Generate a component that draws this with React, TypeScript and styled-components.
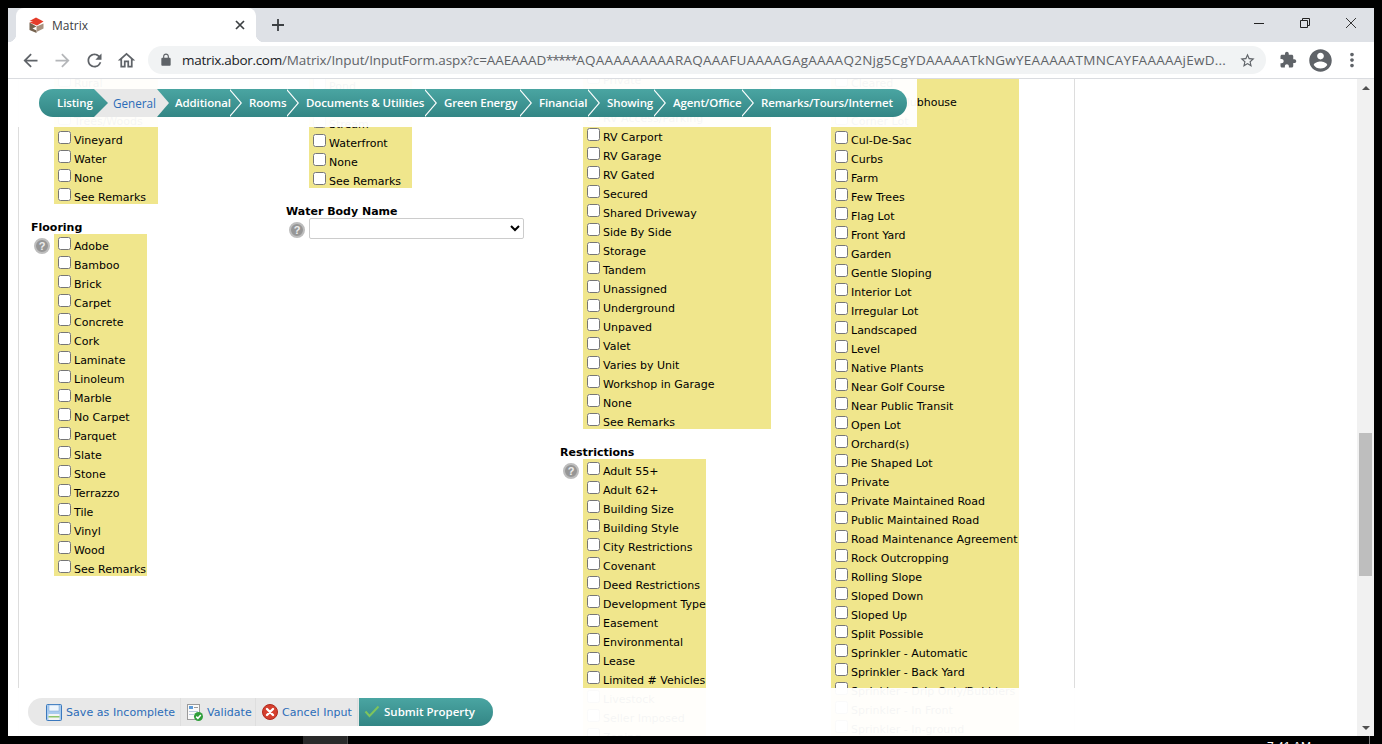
import React from 'react';
import styled, { createGlobalStyle } from 'styled-components';

const GlobalStyle = createGlobalStyle`
  html, body {
    margin: 0;
    padding: 0;
    overflow: hidden;
    background: #000;
  }
`;

const COLORS = {
  KHAKI: '#f0e68c',
  LINK: '#2b6cb8',
  TEAL_TOP: '#4aa5a2',
  TEAL_BOTTOM: '#338685',
  TAB_GREY: '#e8e8e8',
};

const TEAL = `linear-gradient(to bottom, ${COLORS.TEAL_TOP}, ${COLORS.TEAL_BOTTOM})`;
const FORM_FONT = '"DejaVu Sans", Verdana, sans-serif';
const CHROME_FONT = '"Open Sans", "Noto Sans", sans-serif';

const Screen = styled.div`
  display: flex;
  flex-direction: column;
  width: 1382px;
  height: 744px;
  padding-top: 8px;
  box-sizing: border-box;
  background: #000;
  overflow: hidden;
`;

const Browser = styled.div`
  display: flex;
  flex-direction: column;
  height: 728px;
  margin: 0 8px;
  background: #fff;
`;

const TabStrip = styled.div`
  display: flex;
  align-items: flex-end;
  height: 34px;
  padding-left: 8px;
  background: #dee1e6;
`;

const BrowserTab = styled.div`
  position: relative;
  display: flex;
  align-items: center;
  width: 240px;
  height: 34px;
  box-sizing: border-box;
  padding-left: 13px;
  background: #fff;
  border-radius: 8px 8px 0 0;

  &::before,
  &::after {
    content: '';
    position: absolute;
    bottom: 0;
    width: 8px;
    height: 8px;
  }

  &::before {
    left: -8px;
    background: radial-gradient(circle at 0 0, transparent 8px, #fff 8.5px);
  }

  &::after {
    right: -8px;
    background: radial-gradient(circle at 100% 0, transparent 8px, #fff 8.5px);
  }
`;

const TabTitle = styled.span`
  margin-left: 7px;
  flex: 1;
  font: 12px ${CHROME_FONT};
  color: #3c4043;
`;

const TabClose = styled.svg`
  width: 10px;
  height: 10px;
  margin-right: 11px;
`;

const NewTab = styled.svg`
  width: 14px;
  height: 14px;
  margin: 0 0 10px 15px;
`;

const WindowControls = styled.div`
  display: flex;
  margin-left: auto;
  align-self: flex-start;
`;

const WindowButton = styled.div`
  display: flex;
  align-items: center;
  justify-content: center;
  width: 46px;
  height: 29px;
`;

const Toolbar = styled.div`
  display: flex;
  align-items: center;
  height: 36px;
  padding-left: 6px;
  background: #fff;
  border-bottom: 1px solid #dadce0;
`;

const ToolButton = styled.div`
  display: flex;
  align-items: center;
  justify-content: center;
  width: 32px;
  height: 28px;
`;

const Omnibox = styled.div`
  display: flex;
  align-items: center;
  width: 1118px;
  height: 28px;
  margin: 0 6px;
  padding-left: 11px;
  box-sizing: border-box;
  background: #f1f3f4;
  border-radius: 14px;
`;

const UrlText = styled.div`
  width: 1046px;
  margin-left: 9px;
  font: 13.5px ${CHROME_FONT};
  color: #5f6368;
  white-space: nowrap;
  overflow: hidden;
`;

const UrlPart = styled.span<{ $spacing: number; $dark?: boolean }>`
  letter-spacing: ${(p) => p.$spacing}px;
  color: ${(p) => (p.$dark ? '#202124' : 'inherit')};
`;

const StarSlot = styled.div`
  display: flex;
  margin-left: 11px;
`;

const Main = styled.div`
  display: flex;
  height: 657px;
`;

const Scroller = styled.div`
  position: relative;
  flex: 1;
  overflow: hidden;
  background: #fff;
`;

const FormPanel = styled.div`
  display: grid;
  grid-template-columns: 255px 274px 248px 1fr;
  align-items: start;
  width: 1057px;
  height: 760px;
  margin-left: 10px;
  padding-left: 12px;
  box-sizing: border-box;
  border-left: 1px solid #ddd;
  border-right: 1px solid #ddd;
  font: 11px ${FORM_FONT};
  color: #000;
`;

const Column = styled.div<{ $top: number }>`
  margin-top: ${(p) => p.$top}px;
`;

const FieldLabel = styled.div`
  height: 15px;
  margin-top: 15px;
  font-weight: bold;
  line-height: 17px;
  white-space: nowrap;
`;

const FieldBody = styled.div`
  display: flex;
  align-items: flex-start;
`;

const HelpSlot = styled.div`
  flex: 0 0 23px;
`;

const HelpIcon = styled.div`
  display: flex;
  align-items: center;
  justify-content: center;
  width: 16px;
  height: 16px;
  margin: 4px 0 0 3px;
  box-sizing: border-box;
  border: 2px solid #bdbdbd;
  border-radius: 50%;
  background: #969696;
  font: bold 11px "Liberation Sans", Arial, sans-serif;
  color: #ececec;
`;

const OptionList = styled.div<{ $width: number }>`
  width: ${(p) => p.$width}px;
  background: ${COLORS.KHAKI};
`;

const OptionRow = styled.label`
  display: flex;
  align-items: flex-start;
  height: 19px;
  white-space: nowrap;
`;

const OptionBox = styled.input`
  flex: none;
  width: 13px;
  height: 13px;
  margin: 3px 3px 3px 4px;
`;

const OptionText = styled.span`
  padding-top: 5px;
  line-height: 16px;
`;

const WaterSelect = styled.select`
  display: block;
  width: 215px;
  height: 21px;
  box-sizing: border-box;
  background: #fff;
  border: 1px solid #ccc;
  border-radius: 2px;
  font: 11px ${FORM_FONT};
`;

const TabOverlay = styled.div`
  position: absolute;
  top: 0;
  left: 10px;
  width: 899px;
  height: 48px;
  padding: 10px 0 0 21px;
  box-sizing: border-box;
  background: rgba(255, 255, 255, 0.96);
`;

const TabBar = styled.div`
  display: flex;
  width: 868px;
  height: 28px;
  background: ${TEAL};
  border-radius: 14px;
`;

type TipKind = 'line' | 'teal' | 'grey' | 'none';

// $tip: what sits at the right edge of the tab: the usual white chevron, or a solid arrow
const TabItem = styled.div<{ $width: number; $pad: number; $active?: boolean; $tip: TipKind }>`
  position: relative;
  flex: none;
  width: ${(p) => p.$width}px;
  box-sizing: border-box;
  padding-left: ${(p) => p.$pad}px;
  font: ${(p) => (p.$active ? '400 11.7px' : '600 11.5px')}/28px ${CHROME_FONT};
  letter-spacing: ${(p) => (p.$active ? '0' : '-0.12px')};
  color: ${(p) => (p.$active ? COLORS.LINK : '#fff')};
  background: ${(p) => (p.$active ? COLORS.TAB_GREY : 'transparent')};
  white-space: nowrap;

  &::before,
  &::after {
    content: '';
    display: ${(p) => (p.$tip === 'none' ? 'none' : 'block')};
    position: absolute;
    top: 0;
    width: ${(p) => (p.$tip === 'teal' ? 14 : 12)}px;
    height: 28px;
    clip-path: polygon(0 0, 100% 50%, 0 100%);
  }

  &::before {
    left: 100%;
    z-index: 1;
    background: ${(p) => (p.$tip === 'line' ? '#fff' : p.$tip === 'teal' ? TEAL : COLORS.TAB_GREY)};
  }

  &::after {
    display: ${(p) => (p.$tip === 'line' ? 'block' : 'none')};
    left: calc(100% - 1.5px);
    z-index: 1;
    background: ${TEAL};
  }
`;

const TabLabel = styled.span`
  position: relative;
  z-index: 2;
`;

const ActionOverlay = styled.div`
  position: absolute;
  left: 0;
  right: 0;
  bottom: 0;
  height: 48px;
  padding: 10px 0 0 20px;
  box-sizing: border-box;
  background: rgba(255, 255, 255, 0.96);
`;

const ActionBar = styled.div`
  display: flex;
  width: 465px;
  height: 28px;
  overflow: hidden;
  background: ${COLORS.TAB_GREY};
  border-radius: 14px;
`;

const ActionButton = styled.div<{ $width: number; $pad: number }>`
  display: flex;
  align-items: center;
  gap: 4px;
  flex: none;
  width: ${(p) => p.$width}px;
  height: 28px;
  padding-left: ${(p) => p.$pad}px;
  box-sizing: border-box;
  border-right: 1px solid #dedede;
  font: 11px ${FORM_FONT};
  letter-spacing: 0.06px;
  color: ${COLORS.LINK};
  white-space: nowrap;
`;

const SubmitButton = styled(ActionButton)`
  flex: 1;
  margin-left: 1px;
  padding-bottom: 2px;
  border-right: 0;
  background: ${TEAL};
  font: 600 11.5px ${CHROME_FONT};
  letter-spacing: 0;
  color: #fff;
`;

const ScrollTrack = styled.div`
  display: flex;
  flex-direction: column;
  flex: 0 0 17px;
  background: #f1f1f1;
`;

const ScrollArrow = styled.div`
  display: flex;
  align-items: center;
  justify-content: center;
  flex: 0 0 17px;
`;

const ArrowUp = styled.div`
  border: 4px solid transparent;
  border-top: 0;
  border-bottom: 4px solid #505050;
`;

const ArrowDown = styled.div`
  border: 4px solid transparent;
  border-bottom: 0;
  border-top: 4px solid #505050;
`;

const ScrollRail = styled.div`
  flex: 1;
  padding-top: 337px;
`;

const ScrollThumb = styled.div`
  height: 143px;
  margin: 0 2px;
  background: #bebebe;
`;

const Taskbar = styled.div`
  display: flex;
  height: 8px;
  overflow: hidden;
  background: #000;
`;

const TaskItem = styled.div`
  flex: none;
  width: 44px;
  margin-left: 303px;
  background: #2a2a2a;
  border-right: 1px solid #4a4a4a;
`;

const Clock = styled.div`
  margin-left: auto;
  padding-top: 4px;
  font: 12px/14px "Liberation Sans", sans-serif;
  color: #fff;
  white-space: nowrap;
`;

const TaskDivider = styled.div`
  flex: none;
  width: 1px;
  margin: 0 12px 0 58px;
  background: #777;
`;

type Field = { label?: string; help?: boolean; width: number; options: string[] };

const COLUMNS: { top: number; fields: Field[] }[] = [
  {
    top: -8,
    fields: [
      { width: 104, options: ['Rural', '', 'Trees/Woods', 'Vineyard', 'Water', 'None', 'See Remarks'] },
      {
        label: 'Flooring',
        help: true,
        width: 93,
        options: ['Adobe', 'Bamboo', 'Brick', 'Carpet', 'Concrete', 'Cork', 'Laminate', 'Linoleum', 'Marble', 'No Carpet', 'Parquet', 'Slate', 'Stone', 'Terrazzo', 'Tile', 'Vinyl', 'Wood', 'See Remarks'],
      },
    ],
  },
  {
    top: -5,
    fields: [{ width: 103, options: ['Pond', '', 'Stream', 'Waterfront', 'None', 'See Remarks'] }],
  },
  {
    top: -11,
    fields: [
      {
        width: 188,
        options: ['Private', '', 'RV Access/Parking', 'RV Carport', 'RV Garage', 'RV Gated', 'Secured', 'Shared Driveway', 'Side By Side', 'Storage', 'Tandem', 'Unassigned', 'Underground', 'Unpaved', 'Valet', 'Varies by Unit', 'Workshop in Garage', 'None', 'See Remarks'],
      },
      {
        label: 'Restrictions',
        help: true,
        width: 123,
        options: ['Adult 55+', 'Adult 62+', 'Building Size', 'Building Style', 'City Restrictions', 'Covenant', 'Deed Restrictions', 'Development Type', 'Easement', 'Environmental', 'Lease', 'Limited # Vehicles', 'Livestock', 'Seller Imposed', 'Zoning'],
      },
    ],
  },
  {
    top: -8,
    fields: [
      {
        width: 188,
        options: ['Cleared', 'Close to Clubhouse', 'Corner Lot', 'Cul-De-Sac', 'Curbs', 'Farm', 'Few Trees', 'Flag Lot', 'Front Yard', 'Garden', 'Gentle Sloping', 'Interior Lot', 'Irregular Lot', 'Landscaped', 'Level', 'Native Plants', 'Near Golf Course', 'Near Public Transit', 'Open Lot', 'Orchard(s)', 'Pie Shaped Lot', 'Private', 'Private Maintained Road', 'Public Maintained Road', 'Road Maintenance Agreement', 'Rock Outcropping', 'Rolling Slope', 'Sloped Down', 'Sloped Up', 'Split Possible', 'Sprinkler - Automatic', 'Sprinkler - Back Yard', 'Sprinkler - Drip Only/Bubblers', 'Sprinkler - In Front', 'Sprinkler - In-ground'],
      },
    ],
  },
];

const TABS: { title: string; width: number; pad: number; tip: TipKind }[] = [
  { title: 'Listing', width: 55, pad: 18, tip: 'teal' },
  { title: 'General', width: 63, pad: 19, tip: 'grey' },
  { title: 'Additional', width: 73, pad: 18, tip: 'line' },
  { title: 'Rooms', width: 57, pad: 19, tip: 'line' },
  { title: 'Documents & Utilities', width: 138, pad: 19, tip: 'line' },
  { title: 'Green Energy', width: 95, pad: 19, tip: 'line' },
  { title: 'Financial', width: 68, pad: 19, tip: 'line' },
  { title: 'Showing', width: 66, pad: 19, tip: 'line' },
  { title: 'Agent/Office', width: 88, pad: 19, tip: 'line' },
  { title: 'Remarks/Tours/Internet', width: 165, pad: 19, tip: 'none' },
];

const Glyph = ({ d, size, color }: { d: string; size: number; color: string }) => (
  <svg width={size} height={size} viewBox="0 0 24 24" fill={color}>
    <path d={d} />
  </svg>
);

const Favicon = () => (
  <svg width="16" height="16" viewBox="0 0 16 16">
    <polygon points="0.5,5.5 7.5,9.5 3.5,11.5 7.5,13.5 7.5,16 0.5,13" fill="#75624f" />
    <polygon points="7.5,9.5 14.5,6.5 14.5,11.5 7.5,15" fill="#a8917f" />
    <polygon points="0.5,4 7,0.5 14.5,4.5 8,8.5 0.5,5.5 4,4.5" fill="#e53d2b" />
  </svg>
);

const SaveIcon = () => (
  <svg width="16" height="17" viewBox="0 0 16 17">
    <rect x="0.5" y="0.5" width="15" height="16" rx="1" fill="#a9cbee" stroke="#3b78bd" />
    <rect x="3" y="1" width="10" height="6" fill="#eef5fc" stroke="#7ba7d6" strokeWidth="0.5" />
    <rect x="2.5" y="10" width="11" height="6" fill="#f4f4f4" />
    <rect x="2.5" y="12" width="11" height="1.5" fill="#8cc66b" />
  </svg>
);

const ValidateIcon = () => (
  <svg width="16" height="17" viewBox="0 0 16 17">
    <rect x="0.5" y="0.5" width="12" height="15" fill="#fafafa" stroke="#9a9a9a" />
    <rect x="2" y="2" width="4" height="3" fill="#5d9bd8" />
    <rect x="7" y="3" width="4" height="1" fill="#9a9a9a" />
    <rect x="2" y="7" width="9" height="1" fill="#b9c9dc" />
    <rect x="2" y="10" width="5" height="1" fill="#b9c9dc" />
    <circle cx="11.5" cy="12.5" r="4.5" fill="#2f9e3a" />
    <path d="M9.2 12.6l1.7 1.7 2.9-3.2" fill="none" stroke="#fff" strokeWidth="1.5" />
  </svg>
);

const CancelIcon = () => (
  <svg width="16" height="16" viewBox="0 0 16 16">
    <circle cx="8" cy="8" r="7.5" fill="#d5402f" stroke="#b0281c" />
    <path d="M5 5l6 6M11 5l-6 6" stroke="#fff" strokeWidth="2.4" strokeLinecap="round" />
  </svg>
);

const CheckIcon = () => (
  <svg width="16" height="16" viewBox="0 0 16 16">
    <path d="M1.5 8.5l4 4.5L14.5 3.5" fill="none" stroke="#7fc45c" strokeWidth="2" />
  </svg>
);

const ICONS = {
  back: 'M20 11H7.83l5.59-5.59L12 4l-8 8 8 8 1.41-1.41L7.83 13H20v-2z',
  forward: 'M12 4l-1.41 1.41L16.17 11H4v2h12.17l-5.58 5.59L12 20l8-8z',
  reload: 'M17.65 6.35A7.958 7.958 0 0 0 12 4c-4.42 0-7.99 3.58-7.99 8s3.57 8 7.99 8c3.73 0 6.84-2.55 7.73-6h-2.08A5.99 5.99 0 0 1 12 18c-3.31 0-6-2.69-6-6s2.69-6 6-6c1.66 0 3.14.69 4.22 1.78L13 11h7V4l-2.35 2.35z',
  home: 'M12 5.69l5 4.5V18h-2v-6H9v6H7v-7.81l5-4.5M12 3L2 12h3v8h6v-6h2v6h6v-8h3L12 3z',
  lock: 'M18 8h-1V6c0-2.76-2.24-5-5-5S7 3.24 7 6v2H6c-1.1 0-2 .9-2 2v10c0 1.1.9 2 2 2h12c1.1 0 2-.9 2-2V10c0-1.1-.9-2-2-2zM9 6c0-1.66 1.34-3 3-3s3 1.34 3 3v2H9V6z',
  star: 'M22 9.24l-7.19-.62L12 2 9.19 8.63 2 9.24l5.46 4.73L5.82 21 12 17.27 18.18 21l-1.63-7.03L22 9.24zM12 15.4l-3.76 2.27 1-4.28-3.32-2.88 4.38-.38L12 6.1l1.71 4.04 4.38.38-3.32 2.88 1 4.28L12 15.4z',
  puzzle: 'M20.5 11H19V7c0-1.1-.9-2-2-2h-4V3.5C13 2.12 11.88 1 10.5 1S8 2.12 8 3.5V5H4c-1.1 0-1.99.9-1.99 2v3.8H3.5c1.49 0 2.7 1.21 2.7 2.7s-1.21 2.7-2.7 2.7H2V20c0 1.1.9 2 2 2h3.8v-1.5c0-1.49 1.21-2.7 2.7-2.7 1.49 0 2.7 1.21 2.7 2.7V22H17c1.1 0 2-.9 2-2v-4h1.5c1.38 0 2.5-1.12 2.5-2.5S21.88 11 20.5 11z',
  avatar: 'M12 2C6.48 2 2 6.48 2 12s4.48 10 10 10 10-4.48 10-10S17.52 2 12 2zm0 3c1.66 0 3 1.34 3 3s-1.34 3-3 3-3-1.34-3-3 1.34-3 3-3zm0 14.2c-2.5 0-4.71-1.28-6-3.22.03-1.99 4-3.08 6-3.08 1.99 0 5.97 1.09 6 3.08-1.29 1.94-3.5 3.22-6 3.22z',
  kebab: 'M12 8c1.1 0 2-.9 2-2s-.9-2-2-2-2 .9-2 2 .9 2 2 2zm0 2c-1.1 0-2 .9-2 2s.9 2 2 2 2-.9 2-2-.9-2-2-2zm0 6c-1.1 0-2 .9-2 2s.9 2 2 2 2-.9 2-2-.9-2-2-2z',
};

const App = () => {
  return (
    <Screen>
      <GlobalStyle />
      <Browser>
        <TabStrip>
          <BrowserTab>
            <Favicon />
            <TabTitle>Matrix</TabTitle>
            <TabClose viewBox="0 0 10 10">
              <path d="M1 1l8 8M9 1l-8 8" stroke="#3c4043" strokeWidth="1.7" />
            </TabClose>
          </BrowserTab>
          <NewTab viewBox="0 0 14 14">
            <path d="M7 1v12M1 7h12" stroke="#3c4043" strokeWidth="1.8" />
          </NewTab>
          <WindowControls>
            <WindowButton>
              <svg width="10" height="10" viewBox="0 0 10 10">
                <path d="M0 5.5h10" stroke="#222" />
              </svg>
            </WindowButton>
            <WindowButton>
              <svg width="10" height="10" viewBox="0 0 10 10">
                <path d="M0.5 2.5h7v7h-7zM2.5 2.5v-2h7v7h-2" fill="none" stroke="#222" />
              </svg>
            </WindowButton>
            <WindowButton>
              <svg width="10" height="10" viewBox="0 0 10 10">
                <path d="M0 0l10 10M10 0L0 10" stroke="#222" strokeWidth="0.9" />
              </svg>
            </WindowButton>
          </WindowControls>
        </TabStrip>

        <Toolbar>
          <ToolButton><Glyph d={ICONS.back} size={21} color="#5f6368" /></ToolButton>
          <ToolButton><Glyph d={ICONS.forward} size={21} color="#b4b6b9" /></ToolButton>
          <ToolButton><Glyph d={ICONS.reload} size={21} color="#5f6368" /></ToolButton>
          <ToolButton><Glyph d={ICONS.home} size={21} color="#5f6368" /></ToolButton>
          <Omnibox>
            <Glyph d={ICONS.lock} size={14} color="#5f6368" />
            <UrlText>
              <UrlPart $spacing={-0.3} $dark>matrix.abor.com</UrlPart>
              <UrlPart $spacing={-0.1}>/Matrix/Input/InputForm.aspx?c=AAEAAAD</UrlPart>
              <UrlPart $spacing={-1.4}>*****</UrlPart>
              <UrlPart $spacing={0.25}>AQAAAAAAAAARAQAAAFUAAAAGAgAAAAQ2Njg5CgYDAAAAATkNGwYEAAAAATMNCAYFAAAAAjEwD...</UrlPart>
            </UrlText>
            <StarSlot><Glyph d={ICONS.star} size={17} color="#5f6368" /></StarSlot>
          </Omnibox>
          <ToolButton><Glyph d={ICONS.puzzle} size={18} color="#5f6368" /></ToolButton>
          <ToolButton><Glyph d={ICONS.avatar} size={27} color="#5f6368" /></ToolButton>
          <ToolButton><Glyph d={ICONS.kebab} size={22} color="#5f6368" /></ToolButton>
        </Toolbar>

        <Main>
          <Scroller>
            <FormPanel>
              {COLUMNS.map((column, c) => (
                <Column key={c} $top={column.top}>
                  {column.fields.map((field, f) => (
                    <React.Fragment key={f}>
                      {field.label && <FieldLabel>{field.label}</FieldLabel>}
                      <FieldBody>
                        <HelpSlot>{field.help && <HelpIcon>?</HelpIcon>}</HelpSlot>
                        <OptionList $width={field.width}>
                          {field.options.map((option, o) => (
                            <OptionRow key={o}>
                              <OptionBox type="checkbox" />
                              <OptionText>{option}</OptionText>
                            </OptionRow>
                          ))}
                        </OptionList>
                      </FieldBody>
                    </React.Fragment>
                  ))}
                  {c === 1 && (
                    <>
                      <FieldLabel>Water Body Name</FieldLabel>
                      <FieldBody>
                        <HelpSlot><HelpIcon>?</HelpIcon></HelpSlot>
                        <WaterSelect />
                      </FieldBody>
                    </>
                  )}
                </Column>
              ))}
            </FormPanel>

            <TabOverlay>
              <TabBar>
                {TABS.map((tab) => (
                  <TabItem key={tab.title} $width={tab.width} $pad={tab.pad} $tip={tab.tip} $active={tab.title === 'General'}>
                    <TabLabel>{tab.title}</TabLabel>
                  </TabItem>
                ))}
              </TabBar>
            </TabOverlay>

            <ActionOverlay>
              <ActionBar>
                <ActionButton $width={153} $pad={18}><SaveIcon />Save as Incomplete</ActionButton>
                <ActionButton $width={75} $pad={6}><ValidateIcon />Validate</ActionButton>
                <ActionButton $width={102} $pad={6}><CancelIcon />Cancel Input</ActionButton>
                <SubmitButton $width={134} $pad={5}><CheckIcon />Submit Property</SubmitButton>
              </ActionBar>
            </ActionOverlay>
          </Scroller>

          <ScrollTrack>
            <ScrollArrow><ArrowUp /></ScrollArrow>
            <ScrollRail><ScrollThumb /></ScrollRail>
            <ScrollArrow><ArrowDown /></ScrollArrow>
          </ScrollTrack>
        </Main>
      </Browser>
      <Taskbar>
        <TaskItem />
        <Clock>7:41 AM</Clock>
        <TaskDivider />
      </Taskbar>
    </Screen>
  );
};

export default App;
